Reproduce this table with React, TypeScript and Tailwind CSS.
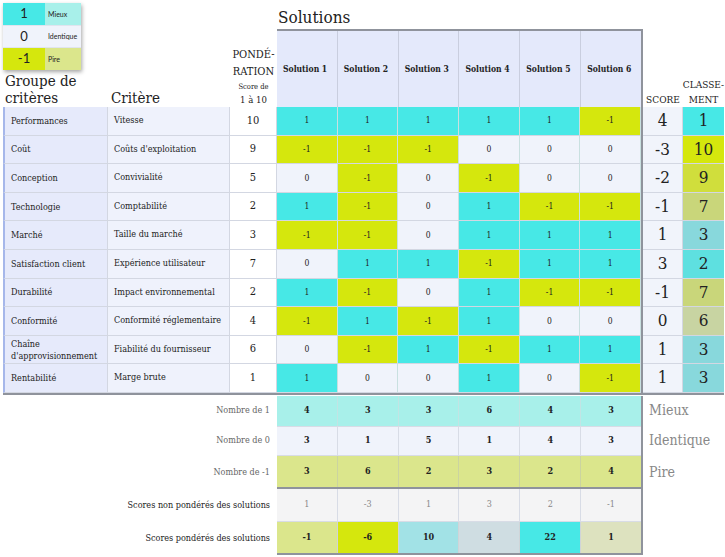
import React from 'react';

type Row = { group: string; crit: string; w: number; vals: number[]; score: number; rank: number };

const rows: Row[] = [
  { group: 'Performances', crit: 'Vitesse', w: 10, vals: [1, 1, 1, 1, 1, -1], score: 4, rank: 1 },
  { group: 'Coût', crit: "Coûts d'exploitation", w: 9, vals: [-1, -1, -1, 0, 0, 0], score: -3, rank: 10 },
  { group: 'Conception', crit: 'Convivialité', w: 5, vals: [0, -1, 0, -1, 0, 0], score: -2, rank: 9 },
  { group: 'Technologie', crit: 'Comptabilité', w: 2, vals: [1, -1, 0, 1, -1, -1], score: -1, rank: 7 },
  { group: 'Marché', crit: 'Taille du marché', w: 3, vals: [-1, -1, 0, 1, 1, 1], score: 1, rank: 3 },
  { group: 'Satisfaction client', crit: 'Expérience utilisateur', w: 7, vals: [0, 1, 1, -1, 1, 1], score: 3, rank: 2 },
  { group: 'Durabilité', crit: 'Impact environnemental', w: 2, vals: [1, -1, 0, 1, -1, -1], score: -1, rank: 7 },
  { group: 'Conformité', crit: 'Conformité réglementaire', w: 4, vals: [-1, 1, -1, 1, 0, 0], score: 0, rank: 6 },
  { group: "Chaîne d'approvisionnement", crit: 'Fiabilité du fournisseur', w: 6, vals: [0, -1, 1, -1, 1, 1], score: 1, rank: 3 },
  { group: 'Rentabilité', crit: 'Marge brute', w: 1, vals: [1, 0, 0, 1, 0, -1], score: 1, rank: 3 },
];

const valBg: Record<number, string> = {
  1: 'bg-[#47e8e6]',
  0: 'bg-[#f0f3fb]',
  [-1]: 'bg-[#d5e70d]',
};

const rankBg: Record<number, string> = {
  1: 'bg-[#47e8e6]',
  2: 'bg-[#5ee0e0]',
  3: 'bg-[#88d8dc]',
  6: 'bg-[#c8d4a2]',
  7: 'bg-[#c9d67a]',
  9: 'bg-[#d0de3c]',
  10: 'bg-[#d5e70d]',
};

const weighted = [
  { v: -1, bg: 'bg-[#dbe68c]' },
  { v: -6, bg: 'bg-[#d5e70d]' },
  { v: 10, bg: 'bg-[#a2e2e6]' },
  { v: 4, bg: 'bg-[#cfdde2]' },
  { v: 22, bg: 'bg-[#47e8e6]' },
  { v: 1, bg: 'bg-[#dde2bf]' },
];

const cell = 'flex items-center justify-center border-r border-b border-[#d3d7e2]';

export default function App() {
  return (
    <div className="w-[725px] h-[557px] bg-white pl-[3px] pt-[3px] text-[#222] font-['DejaVu_Serif_Condensed','DejaVu_Serif',serif] overflow-hidden">
      {/* header */}
      <div className="flex h-[104px]">
        <div className="w-[105px] flex flex-col">
          <div className="w-[78px] h-[67px] shadow-[1px_2px_4px_rgba(0,0,0,0.35)] font-['Lato',sans-serif] flex flex-col">
            <div className="flex h-[22px]">
              <div className="w-[42px] bg-[#47e8e6] flex items-center justify-center text-[13px]">1</div>
              <div className="flex-1 bg-[#a8f0ea] flex items-center pl-[3px] text-[7px]">Mieux</div>
            </div>
            <div className="flex h-[23px] border-y border-[#e0e4ee]">
              <div className="w-[42px] bg-[#f0f3fb] flex items-center justify-center text-[13px]">0</div>
              <div className="flex-1 bg-[#f0f3fb] flex items-center pl-[3px] text-[7px]">Identique</div>
            </div>
            <div className="flex h-[22px]">
              <div className="w-[42px] bg-[#d5e70d] flex items-center justify-center text-[13px]">-1</div>
              <div className="flex-1 bg-[#dbe68c] flex items-center pl-[3px] text-[7px]">Pire</div>
            </div>
          </div>
          <div className="mt-auto text-[15px] leading-[17px] pl-[2px]">Groupe de<br />critères</div>
        </div>
        <div className="w-[122px] flex items-end pl-[3px] text-[15px] leading-[17px]">Critère</div>
        <div className="w-[47px] flex flex-col items-center justify-end text-center">
          <div className="text-[11px] leading-[17px]">PONDÉ-<br />RATION</div>
          <div className="text-[7.5px] leading-[12px] mt-[1px]">Score de</div>
          <div className="text-[9.5px] leading-[14px]">1 à 10</div>
        </div>
        <div className="w-[366px] flex flex-col">
          <div className="h-[26px] text-[17px] leading-[22px] pl-[1px] pt-[3px]">Solutions</div>
          <div className="flex flex-1 border-t-2 border-r-2 border-[#8f939c]">
            {[1, 2, 3, 4, 5, 6].map((n) => (
              <div key={n} className="flex-1 bg-[#e4e9fb] border-r border-[#c9cedf] last:border-r-0 flex items-center pl-[6px] text-[8.5px] font-bold">
                Solution {n}
              </div>
            ))}
          </div>
        </div>
        <div className="w-[40px] flex items-end justify-center text-[10px] leading-[14px]">SCORE</div>
        <div className="w-[41px] flex items-end justify-center text-center text-[10px] leading-[15px]">CLASSE-<br />MENT</div>
      </div>

      {/* criteria rows */}
      <div className="flex flex-col border-b-2 border-[#8f939c] w-[721px]">
        {rows.map((r, i) => (
          <div key={i} className="flex h-[28.6px]">
            <div className={`${cell} w-[105px] justify-start pl-[6px] bg-[#e6eafb] border-l-2 border-l-[#a6b7ea] text-[9px] leading-[12px]`}>
              {r.group === "Chaîne d'approvisionnement" ? (
                <span>Chaîne<br />d'approvisionnement</span>
              ) : (
                r.group
              )}
            </div>
            <div className={`${cell} w-[122px] justify-start pl-[6px] bg-[#eff2fc] text-[9px]`}>{r.crit}</div>
            <div className={`${cell} w-[47px] bg-white text-[11px]`}>{r.w}</div>
            <div className="flex w-[366px] border-r-2 border-[#8f939c]">
              {r.vals.map((v, j) => (
                <div key={j} className={`${cell} flex-1 ${valBg[v]} border-r-[#c9e0e0] text-[8.5px]`}>
                  {v}
                </div>
              ))}
            </div>
            <div className={`${cell} w-[40px] bg-[#f1f4fb] text-[17px]`}>{r.score}</div>
            <div className={`${cell} w-[41px] ${rankBg[r.rank]} border-r-0 text-[17px]`}>{r.rank}</div>
          </div>
        ))}
      </div>

      {/* summary */}
      <div className="flex mt-[1px]">
        <div className="w-[274px] flex flex-col text-[9px] items-end pr-[7px]">
          <div className="h-[30px] flex items-center text-[#666]">Nombre de 1</div>
          <div className="h-[30px] flex items-center text-[#666]">Nombre de 0</div>
          <div className="h-[33px] flex items-center text-[#666]">Nombre de -1</div>
          <div className="h-[33px] flex items-center">Scores non pondérés des solutions</div>
          <div className="h-[33px] flex items-center">Scores pondérés des solutions</div>
        </div>
        <div className="w-[366px] flex flex-col border-r-2 border-[#8f939c] text-[9px]">
          <div className="flex h-[30px] bg-[#a8f0ea]">
            {[4, 3, 3, 6, 4, 3].map((v, j) => (
              <div key={j} className="flex-1 flex items-center justify-center border-r border-[#c2e4e4] last:border-r-0 font-bold">{v}</div>
            ))}
          </div>
          <div className="flex h-[30px] bg-[#f0f3fb] border-y border-[#d8dce6]">
            {[3, 1, 5, 1, 4, 3].map((v, j) => (
              <div key={j} className="flex-1 flex items-center justify-center border-r border-[#d8dce6] last:border-r-0 font-bold">{v}</div>
            ))}
          </div>
          <div className="flex h-[33px] bg-[#dbe68c] border-b-2 border-[#8f939c]">
            {[3, 6, 2, 3, 2, 4].map((v, j) => (
              <div key={j} className="flex-1 flex items-center justify-center border-r border-[#cbd4a0] last:border-r-0 font-bold">{v}</div>
            ))}
          </div>
          <div className="flex h-[33px] bg-[#f4f4f5] border-b border-[#d8dce6] text-[#888]">
            {[1, -3, 1, 3, 2, -1].map((v, j) => (
              <div key={j} className="flex-1 flex items-center justify-center border-r border-[#d8dce6] last:border-r-0">{v}</div>
            ))}
          </div>
          <div className="flex h-[33px] border-b-2 border-[#8f939c]">
            {weighted.map((c, j) => (
              <div key={j} className={`flex-1 flex items-center justify-center border-r border-[#d0d4d8] last:border-r-0 font-bold ${c.bg}`}>{c.v}</div>
            ))}
          </div>
        </div>
        <div className="flex flex-col pl-[6px] text-[14px] text-[#888]">
          <div className="h-[30px] flex items-center">Mieux</div>
          <div className="h-[30px] flex items-center">Identique</div>
          <div className="h-[33px] flex items-center">Pire</div>
        </div>
      </div>
    </div>
  );
}
